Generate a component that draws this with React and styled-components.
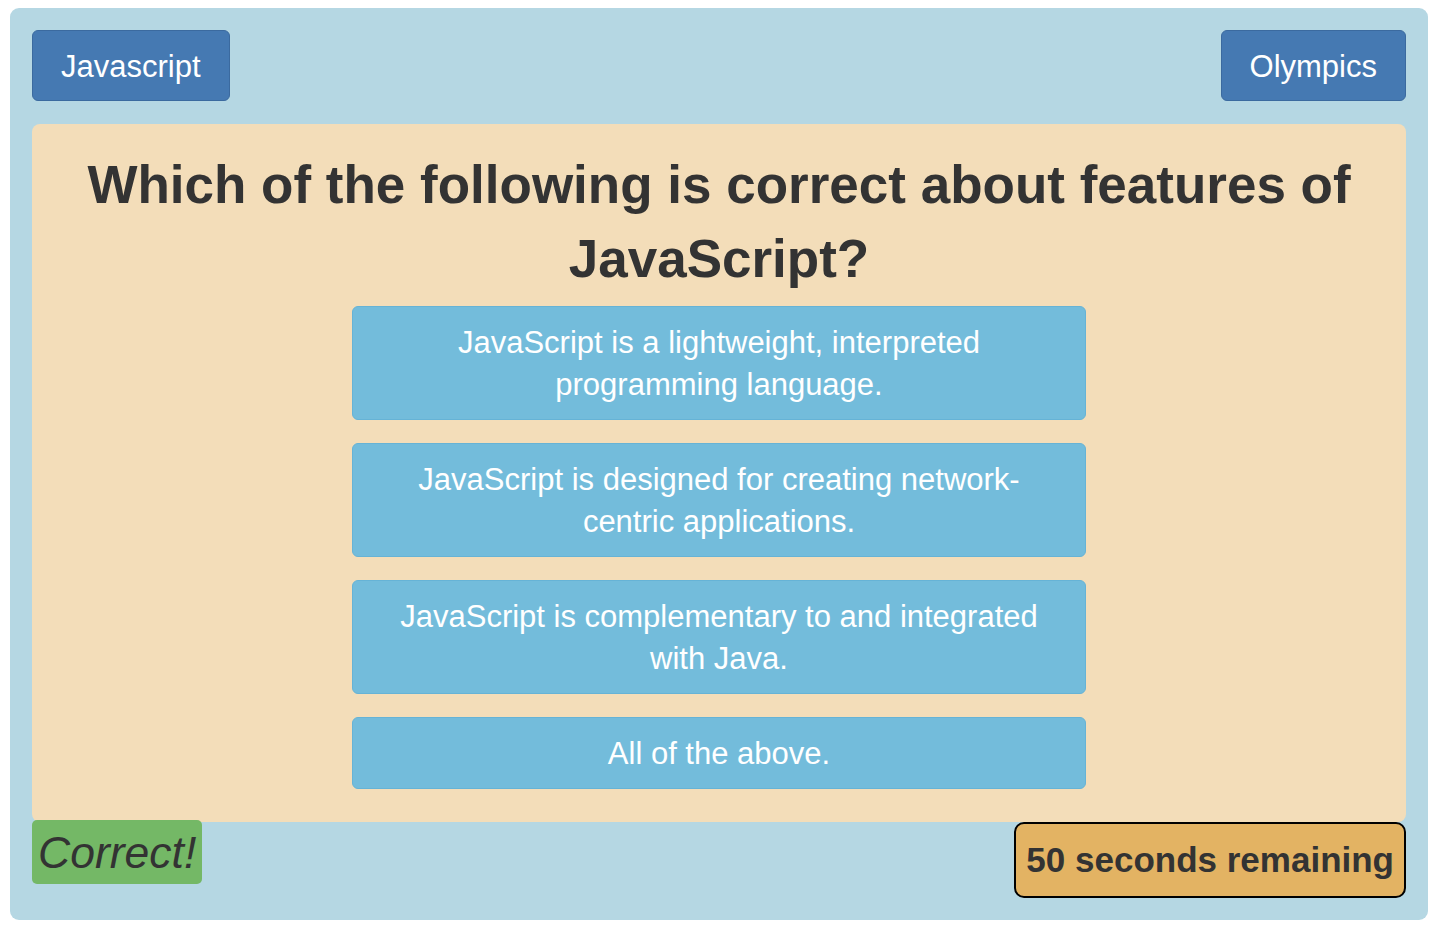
import React from "react";
import styled, { createGlobalStyle } from "styled-components";

const quiz = {
  question: "Which of the following is correct about features of JavaScript?",
  answers: [
    "JavaScript is a lightweight, interpreted programming language.",
    "JavaScript is designed for creating network-centric applications.",
    "JavaScript is complementary to and integrated with Java.",
    "All of the above.",
  ],
};

const App = () => {
  return (
    <>
      <GlobalStyle />
      <Frame>
        <TopBar>
          <TopicButton type="button">Javascript</TopicButton>
          <TopicButton type="button">Olympics</TopicButton>
        </TopBar>
        <Card>
          <Question>{quiz.question}</Question>
          <Answers>
            {quiz.answers.map((answer) => (
              <AnswerButton key={answer} type="button">
                {answer}
              </AnswerButton>
            ))}
          </Answers>
        </Card>
        <BottomBar>
          <Result>Correct!</Result>
          <Timer>50 seconds remaining</Timer>
        </BottomBar>
      </Frame>
    </>
  );
};

export default App;

const GlobalStyle = createGlobalStyle`
  body {
    margin: 0;
    background: #ffffff;
    font-family: "Liberation Sans", Arial, Helvetica, sans-serif;
    color: #333333;
  }
`;

const Frame = styled.div`
  margin: 8px 10px;
  padding: 22px;
  background: #b5d7e3;
  border-radius: 9px;
  display: flex;
  flex-direction: column;
`;

const TopBar = styled.div`
  display: flex;
  justify-content: space-between;
  align-items: flex-start;
  margin-bottom: 23px;
`;

const TopicButton = styled.button`
  font-family: inherit;
  font-size: 31px;
  color: #ffffff;
  background: #4579b2;
  border: 1px solid #3b6a9f;
  border-radius: 6px;
  height: 71px;
  padding: 3px 28px 0;
  cursor: pointer;
`;

const Card = styled.div`
  background: #f3ddb9;
  border-radius: 8px;
  padding: 24px 30px 33px;
  display: flex;
  flex-direction: column;
  align-items: center;
`;

const Question = styled.h1`
  margin: 0 0 10px;
  font-size: 53px;
  line-height: 74px;
  font-weight: 700;
  text-align: center;
  color: #333333;
`;

const Answers = styled.div`
  width: 734px;
  display: flex;
  flex-direction: column;
  gap: 23px;
`;

const AnswerButton = styled.button`
  font-family: inherit;
  font-size: 31px;
  line-height: 42px;
  color: #ffffff;
  background: #73bcdb;
  border: 1px solid #66b3d6;
  border-radius: 6px;
  padding: 15px 40px 13px;
  text-align: center;
  cursor: pointer;
`;

const BottomBar = styled.div`
  display: flex;
  justify-content: space-between;
  align-items: flex-start;
`;

const Result = styled.div`
  margin-top: -2px;
  background: #74b866;
  border-radius: 5px;
  padding: 0 6px;
  height: 64px;
  line-height: 66px;
  font-size: 44.5px;
  font-style: italic;
  color: #333333;
`;

const Timer = styled.div`
  background: #e3b363;
  border: 2px solid #000000;
  border-radius: 10px;
  height: 72px;
  padding: 0 10px;
  display: flex;
  align-items: center;
  font-size: 35px;
  font-weight: 700;
  color: #333333;
`;
